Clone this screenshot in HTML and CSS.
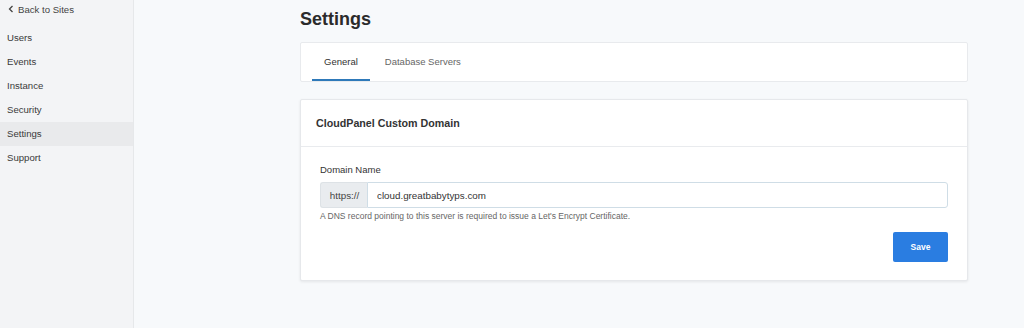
FILE: index.html
```html
<!DOCTYPE html>
<html lang="en">
<head>
  <meta charset="UTF-8">
  <meta name="viewport" content="width=device-width, initial-scale=1.0">
  <title>Settings</title>
  <link rel="stylesheet" href="styles.css">
</head>
<body>
  <!-- Sidebar -->
  <aside class="sidebar">
    <a class="back-link" href="#">
      <svg class="chevron" width="6" height="8" viewBox="0 0 6 8"><path d="M4.5 1 L1.5 4 L4.5 7" fill="none" stroke="#444" stroke-width="1.3"/></svg>
      Back to Sites
    </a>
    <nav class="menu">
      <a href="#">Users</a>
      <a href="#">Events</a>
      <a href="#">Instance</a>
      <a href="#">Security</a>
      <a href="#" class="active">Settings</a>
      <a href="#">Support</a>
    </nav>
  </aside>

  <!-- Main -->
  <main class="main">
    <h1>Settings</h1>

    <div class="tabs">
      <a href="#" class="tab active">General</a>
      <a href="#" class="tab">Database Servers</a>
    </div>

    <div class="card">
      <div class="card-header">CloudPanel Custom Domain</div>
      <div class="card-body">
        <label class="field-label">Domain Name</label>
        <div class="input-group">
          <span class="prefix">https://</span>
          <input type="text" value="cloud.greatbabytyps.com">
        </div>
        <p class="help">A DNS record pointing to this server is required to issue a Let's Encrypt Certificate.</p>
        <div class="actions">
          <button>Save</button>
        </div>
      </div>
    </div>
  </main>
</body>
</html>
```

FILE: styles.css
```css
body {
  margin: 0;
  height: 328px;
  display: flex;
  font-family: "Liberation Sans", Arial, sans-serif;
  background-color: #f7f9fb;
  color: #333;
  overflow: hidden;
}
a {
  text-decoration: none;
  color: inherit;
}
.sidebar {
  width: 133px;
  flex-shrink: 0;
  background-color: #f3f4f6;
  border-right: 1px solid #e6e8ea;
}
.back-link {
  display: flex;
  align-items: center;
  gap: 4px;
  height: 18px;
  padding-left: 8px;
  font-size: 9.6px;
  color: #444;
}
.menu {
  margin-top: 8px;
}
.menu a {
  display: block;
  height: 24px;
  line-height: 24px;
  padding-left: 7px;
  font-size: 9.6px;
  color: #3a3a3a;
}
.menu a.active {
  background-color: #e9eaec;
}
.main {
  padding-left: 166px;
  width: 668px;
}
h1 {
  margin: 8px 0 12px;
  font-size: 18px;
  line-height: 22px;
  color: #2b2b2b;
}
.tabs {
  display: flex;
  gap: 3px;
  height: 38px;
  padding-left: 11px;
  background: #fff;
  border: 1px solid #e8eaed;
  border-radius: 2px;
  margin-bottom: 17px;
}
.tab {
  padding: 0 12px;
  line-height: 38px;
  font-size: 9.5px;
  color: #666;
  border-bottom: 2px solid transparent;
  box-sizing: border-box;
}
.tab.active {
  color: #333;
  border-bottom-color: #2e79b9;
}
.card {
  background: #fff;
  border: 1px solid #e6e8eb;
  border-radius: 2px;
  box-shadow: 0 1px 3px rgba(0, 0, 0, 0.08);
}
.card-header {
  height: 46px;
  line-height: 46px;
  padding-left: 15px;
  font-size: 10.7px;
  font-weight: bold;
  color: #333;
  border-bottom: 1px solid #e9ebee;
}
.card-body {
  padding: 17px 19px 18px;
}
.field-label {
  display: block;
  font-size: 9.5px;
  line-height: 12px;
  color: #333;
  margin-bottom: 6px;
}
.input-group {
  display: flex;
  height: 26px;
}
.prefix {
  width: 45px;
  padding-left: 1px;
  display: flex;
  align-items: center;
  justify-content: center;
  background: #e9ecef;
  border: 1px solid #dde2e6;
  border-right: none;
  border-radius: 3px 0 0 3px;
  font-size: 9.8px;
  color: #444;
}
.input-group input {
  flex: 1;
  border: 1px solid #cfdde6;
  border-radius: 0 3px 3px 0;
  padding: 0 9px;
  font-family: inherit;
  font-size: 9.8px;
  color: #333;
  outline: none;
}
.help {
  margin: 3px 0 0;
  font-size: 8.5px;
  line-height: 10px;
  color: #666;
}
.actions {
  display: flex;
  justify-content: flex-end;
  margin-top: 11px;
}
button {
  width: 55px;
  height: 30px;
  background-color: #2a7de1;
  color: #fff;
  border: none;
  border-radius: 2px;
  font-family: inherit;
  font-size: 8.5px;
  font-weight: bold;
}
```
